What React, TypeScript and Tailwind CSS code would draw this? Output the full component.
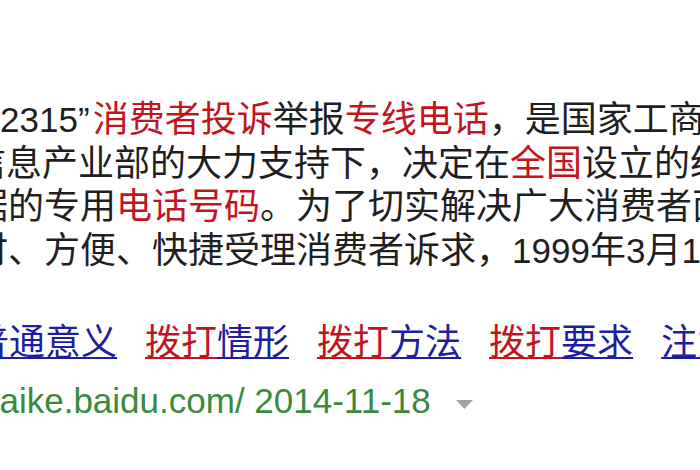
import React from 'react'

const Red = ({ children }: { children: React.ReactNode }) => (
  <span className="text-[#c2141c]">{children}</span>
)

const Num = ({ children }: { children: React.ReactNode }) => (
  <span className="text-[35px] leading-none">{children}</span>
)

// link words: [text, isKeyword]
const LINKS: [string, boolean][][] = [
  [['普通意义', false]],
  [['拨打', true], ['情形', false]],
  [['拨打', true], ['方法', false]],
  [['拨打', true], ['要求', false]],
  [['注意事项', false]],
]

export default function App() {
  return (
    <div className="w-[700px] h-[470px] overflow-hidden bg-white">
      <div className="pt-[98px] text-[36px] leading-[43.5px] text-[#1f1f1f] font-['Liberation_Sans','Noto_Sans_CJK_SC',sans-serif]">
        <div className="h-[43.5px] -ml-[31px] whitespace-nowrap">
          <Num>“12315”</Num>
          <span className="ml-[3px]" />
          <Red>消费者投诉</Red>举报<Red>专线电话</Red>，是国家工商行政管理局
        </div>
        <div className="h-[43.5px] -ml-[30px] whitespace-nowrap">
          信息产业部的大力支持下，决定在<Red>全国</Red>设立的统一
        </div>
        <div className="h-[43.5px] -ml-[28px] whitespace-nowrap">
          据的专用<Red>电话号码</Red>。为了切实解决广大消费者面临的
        </div>
        <div className="h-[43.5px] -ml-[28px] whitespace-nowrap">
          时、方便、快捷受理消费者诉求，<Num>1999</Num>年<Num>3</Num>月<Num>15</Num>日
        </div>

        <div className="mt-[49px] -ml-[27px] flex gap-[28px] whitespace-nowrap">
          {LINKS.map((parts, i) => (
            <a key={i} href="#" className="shrink-0">
              {parts.map(([t, kw], j) => (
                <span
                  key={j}
                  className={
                    kw
                      ? 'text-[#c2141c] underline decoration-[#c2141c] decoration-2 underline-offset-[2px]'
                      : 'text-[#221c9e] underline decoration-[#221c9e] decoration-2 underline-offset-[2px]'
                  }
                >
                  {t}
                </span>
              ))}
            </a>
          ))}
        </div>

        <div className="mt-[14px] -ml-[20px] flex items-center whitespace-nowrap text-[35px] text-[#3a8a3e]">
          <span>baike.baidu.com/ 2014-11-18</span>
          <svg className="ml-[25px] mt-[8px]" width="17" height="9" viewBox="0 0 17 9">
            <path d="M0 0 H17 L8.5 9 Z" fill="#9ea79e" />
          </svg>
        </div>
      </div>
    </div>
  )
}
